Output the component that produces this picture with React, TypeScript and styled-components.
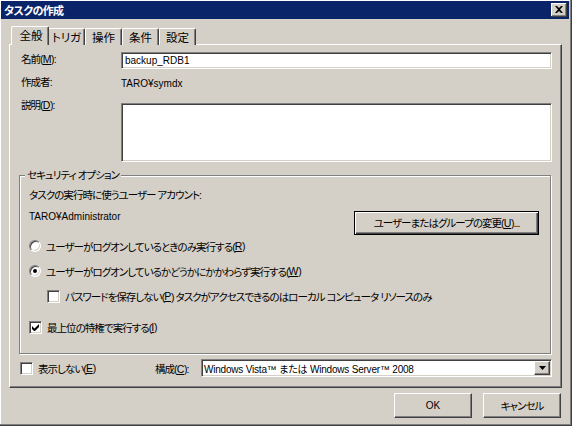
import React from 'react';
import styled, { createGlobalStyle } from 'styled-components';

const FACE = '#d4d0c8';
const SHADOW = '#808080';
const DARK = '#404040';

const GlobalStyle = createGlobalStyle`
  html, body {
    margin: 0;
    padding: 0;
    background: ${FACE};
  }
  body {
    font-family: "Liberation Sans", "Noto Sans CJK JP", sans-serif;
    font-size: 10.5px;
    letter-spacing: -0.95px;
    color: #000;
    font-feature-settings: "palt";
  }
  * {
    box-sizing: border-box;
  }
`;

const tabs = ['全般', 'トリガ', '操作', '条件', '設定'];

const Mn = ({ children }: { children: React.ReactNode }) => <StyledUnderline>{children}</StyledUnderline>;

const CheckBox = ({ checked }: { checked?: boolean }) => (
  <StyledCheck>
    {checked && (
      <svg width="7" height="7" viewBox="0 0 7 7">
        <path d="M0 2v3l2 2h1l4-4V0L2.5 4.5z" fill="#000" />
      </svg>
    )}
  </StyledCheck>
);

const Radio = ({ checked }: { checked?: boolean }) => (
  <StyledRadio>{checked && <StyledRadioDot />}</StyledRadio>
);

const App = () => {
  return (
    <>
      <GlobalStyle />
      <StyledWindow>
        <StyledTitleBar>
          <StyledTitle>タスクの作成</StyledTitle>
          <StyledCloseButton>
            <svg width="8" height="7" viewBox="0 0 8 7">
              <path d="M0 0h2l2 2 2-2h2L5 3.5 8 7H6L4 5 2 7H0l3-3.5z" fill="#000" />
            </svg>
          </StyledCloseButton>
        </StyledTitleBar>

        <StyledBody>
          <StyledTabStrip>
            {tabs.map((t, i) => (
              <StyledTab key={t} active={i === 0}>
                {t}
              </StyledTab>
            ))}
          </StyledTabStrip>

          <StyledPanel>
            <StyledFieldRow>
              <StyledLabel>
                名前(<Mn>M</Mn>):
              </StyledLabel>
              <StyledInput>
                <StyledLatin>backup_RDB1</StyledLatin>
              </StyledInput>
            </StyledFieldRow>

            <StyledInfoRow>
              <StyledLabel>作成者:</StyledLabel>
              <StyledLatin>TARO¥symdx</StyledLatin>
            </StyledInfoRow>

            <StyledDescRow>
              <StyledLabel lift>
                説明(<Mn>D</Mn>):
              </StyledLabel>
              <StyledTextArea />
            </StyledDescRow>

            <StyledGroup>
              <StyledLegend>セキュリティ オプション</StyledLegend>
              <StyledLine>タスクの実行時に使うユーザー アカウント:</StyledLine>
              <StyledAccountRow>
                <StyledLine>
                  <StyledLatin>TARO¥Administrator</StyledLatin>
                </StyledLine>
                <StyledDefaultButton>
                  ユーザーまたはグループの変更(<Mn>U</Mn>)...
                </StyledDefaultButton>
              </StyledAccountRow>

              <StyledOptionRow gap={4}>
                <Radio />
                ユーザーがログオンしているときのみ実行する(<Mn>R</Mn>)
              </StyledOptionRow>
              <StyledOptionRow gap={11}>
                <Radio checked />
                ユーザーがログオンしているかどうかにかかわらず実行する(<Mn>W</Mn>)
              </StyledOptionRow>
              <StyledOptionRow gap={11} indent={18}>
                <CheckBox />
                パスワードを保存しない(<Mn>P</Mn>) タスクがアクセスできるのはローカル コンピュータ リソースのみ
              </StyledOptionRow>
              <StyledOptionRow gap={17}>
                <CheckBox checked />
                最上位の特権で実行する(<Mn>I</Mn>)
              </StyledOptionRow>
            </StyledGroup>

            <StyledConfigRow>
              <StyledHideOption>
                <CheckBox />
                表示しない(<Mn>E</Mn>)
              </StyledHideOption>
              <StyledConfigLabel>
                構成(<Mn>C</Mn>):
              </StyledConfigLabel>
              <StyledCombo>
                <StyledComboText>
                  <StyledLatin tight>Windows Vista™ または Windows Server™ 2008</StyledLatin>
                </StyledComboText>
                <StyledComboArrow>
                  <svg width="7" height="4" viewBox="0 0 7 4">
                    <path d="M0 0h7L3.5 4z" fill="#000" />
                  </svg>
                </StyledComboArrow>
              </StyledCombo>
            </StyledConfigRow>
          </StyledPanel>

          <StyledFooter>
            <StyledButton>
              <StyledLatin>OK</StyledLatin>
            </StyledButton>
            <StyledButton>キャンセル</StyledButton>
          </StyledFooter>
        </StyledBody>
      </StyledWindow>
    </>
  );
};

export default App;

const StyledWindow = styled.div`
  width: 572px;
  height: 426px;
  padding: 1px 3px 3px 1px;
  background: ${FACE};
  box-shadow: inset -1px -1px 0 ${DARK}, inset -2px -2px 0 ${SHADOW}, inset 1px 1px 0 #fff;
  display: flex;
  flex-direction: column;
`;

const StyledTitleBar = styled.div`
  height: 18px;
  background: #0a246a;
  display: flex;
  align-items: center;
  justify-content: space-between;
  padding: 0 2px 0 3px;
`;

const StyledTitle = styled.span`
  color: #fff;
  font-weight: bold;
  font-size: 11px;
  letter-spacing: -0.6px;
`;

const StyledCloseButton = styled.div`
  width: 16px;
  height: 14px;
  background: ${FACE};
  box-shadow: inset -1px -1px 0 ${DARK}, inset 1px 1px 0 #fff, inset -2px -2px 0 ${SHADOW};
  display: flex;
  align-items: center;
  justify-content: center;
  padding-bottom: 1px;
`;

const StyledBody = styled.div`
  flex: 1;
  display: flex;
  flex-direction: column;
  padding: 7px 0 0 8px;
`;

// Latin strings keep their natural spacing, only the Japanese text is condensed
const StyledLatin = styled.span<{ tight?: boolean }>`
  font-size: 10px;
  letter-spacing: ${({ tight }) => (tight ? '-0.2px' : '0')};
`;

const StyledTabStrip = styled.div`
  display: flex;
  align-items: flex-end;
  height: 19px;
  padding-left: 4px;
  position: relative;
  z-index: 1;
  margin-bottom: -1px;
`;

const StyledTab = styled.div<{ active?: boolean }>`
  width: ${({ active }) => (active ? 38 : 37)}px;
  height: ${({ active }) => (active ? 19 : 17)}px;
  margin: ${({ active }) => (active ? '0 -1px 0 -2px' : '0')};
  padding-left: ${({ active }) => (active ? 2 : 0)}px;
  background: ${FACE};
  border-top: 1px solid #fff;
  border-left: 1px solid #fff;
  border-right: 1px solid ${DARK};
  border-radius: 2px 2px 0 0;
  box-shadow: inset -1px 0 0 ${SHADOW};
  display: flex;
  align-items: center;
  justify-content: center;
  padding-bottom: ${({ active }) => (active ? 2 : 1)}px;
  font-size: 11.5px;
  letter-spacing: 0;
  z-index: ${({ active }) => (active ? 2 : 0)};
`;

const StyledPanel = styled.div`
  width: 553px;
  height: 344px;
  border-top: 1px solid #fff;
  border-left: 1px solid #fff;
  border-right: 1px solid ${DARK};
  border-bottom: 1px solid ${DARK};
  box-shadow: inset -1px -1px 0 ${SHADOW};
  padding: 7px 9px 0 11px;
  display: flex;
  flex-direction: column;
`;

const StyledFieldRow = styled.div`
  display: flex;
  align-items: center;
  height: 16px;
`;

const StyledLabel = styled.span<{ lift?: boolean }>`
  width: 100px;
  flex-shrink: 0;
  margin-top: ${({ lift }) => (lift ? -4 : -3)}px;
`;

const StyledUnderline = styled.span`
  text-decoration: underline;
  text-underline-offset: 1px;
  letter-spacing: -0.3px;
`;

const sunken = `
  background: #fff;
  border-top: 1px solid ${SHADOW};
  border-left: 1px solid ${SHADOW};
  border-right: 1px solid #fff;
  border-bottom: 1px solid #fff;
  box-shadow: inset 1px 1px 0 ${DARK}, inset -1px -1px 0 ${FACE};
`;

const StyledInput = styled.div`
  ${sunken};
  width: 431px;
  height: 17px;
  padding: 1px 3px 0;
  display: flex;
  align-items: center;
`;

const StyledInfoRow = styled.div`
  display: flex;
  align-items: center;
  height: 16px;
  margin-top: 7px;
`;

const StyledDescRow = styled.div`
  display: flex;
  align-items: flex-start;
  margin-top: 12px;
  line-height: 12px;
`;

const StyledTextArea = styled.div`
  ${sunken};
  width: 431px;
  height: 59px;
`;

const StyledGroup = styled.div`
  position: relative;
  margin: 13px 1px 0 -2px;
  height: 179px;
  border: 1px solid ${SHADOW};
  box-shadow: inset 1px 1px 0 #fff, 1px 1px 0 #fff;
  padding: 12px 11px 0 9px;
  display: flex;
  flex-direction: column;
`;

const StyledLegend = styled.span`
  position: absolute;
  top: -8px;
  left: 5px;
  padding: 0 2px;
  background: ${FACE};
  line-height: 14px;
`;

const StyledLine = styled.div`
  line-height: 14px;
`;

const StyledAccountRow = styled.div`
  display: flex;
  justify-content: space-between;
  align-items: flex-start;
  margin-top: 7px;
`;

const raised = `
  background: ${FACE};
  border-top: 1px solid #fff;
  border-left: 1px solid #fff;
  border-right: 1px solid ${DARK};
  border-bottom: 1px solid ${DARK};
  box-shadow: inset -1px -1px 0 ${SHADOW};
`;

const StyledDefaultButton = styled.div`
  width: 185px;
  height: 24px;
  margin-top: 2px;
  background: ${FACE};
  border: 1px solid #000;
  box-shadow: inset 1px 1px 0 #fff, inset -1px -1px 0 ${DARK}, inset -2px -2px 0 ${SHADOW};
  display: flex;
  align-items: center;
  justify-content: center;
  padding-bottom: 1px;
`;

const StyledOptionRow = styled.div<{ gap: number; indent?: number }>`
  display: flex;
  align-items: center;
  height: 14px;
  margin-top: ${({ gap }) => gap}px;
  padding-left: ${({ indent }) => indent || 0}px;
  white-space: nowrap;
`;

const StyledCheck = styled.span`
  ${sunken};
  width: 13px;
  height: 13px;
  flex-shrink: 0;
  margin-right: 5px;
  display: inline-flex;
  align-items: center;
  justify-content: center;
`;

const StyledRadio = styled.span`
  width: 12px;
  height: 12px;
  flex-shrink: 0;
  margin-right: 5px;
  border-radius: 50%;
  background: #fff;
  border-top: 1px solid ${SHADOW};
  border-left: 1px solid ${SHADOW};
  border-right: 1px solid #fff;
  border-bottom: 1px solid #fff;
  box-shadow: inset 1px 1px 0 ${DARK}, inset -1px -1px 0 ${FACE};
  display: inline-flex;
  align-items: center;
  justify-content: center;
`;

const StyledRadioDot = styled.span`
  width: 4px;
  height: 4px;
  border-radius: 50%;
  background: #000;
`;

const StyledConfigRow = styled.div`
  display: flex;
  align-items: center;
  margin: 5px 0 0 -1px;
  height: 18px;
`;

const StyledHideOption = styled.div`
  display: flex;
  align-items: center;
  width: 135px;
`;

const StyledConfigLabel = styled.span`
  width: 46px;
`;

const StyledCombo = styled.div`
  ${sunken};
  flex: 1;
  height: 18px;
  display: flex;
  align-items: stretch;
  padding: 1px 1px 1px 0;
`;

const StyledComboText = styled.span`
  flex: 1;
  display: flex;
  align-items: center;
  padding-left: 2px;
`;

const StyledComboArrow = styled.span`
  ${raised};
  width: 16px;
  display: flex;
  align-items: center;
  justify-content: center;
`;

const StyledFooter = styled.div`
  display: flex;
  justify-content: flex-end;
  gap: 11px;
  margin-top: 5px;
  padding-right: 8px;
`;

const StyledButton = styled.div`
  ${raised};
  width: 78px;
  height: 25px;
  display: flex;
  align-items: center;
  justify-content: center;
`;
